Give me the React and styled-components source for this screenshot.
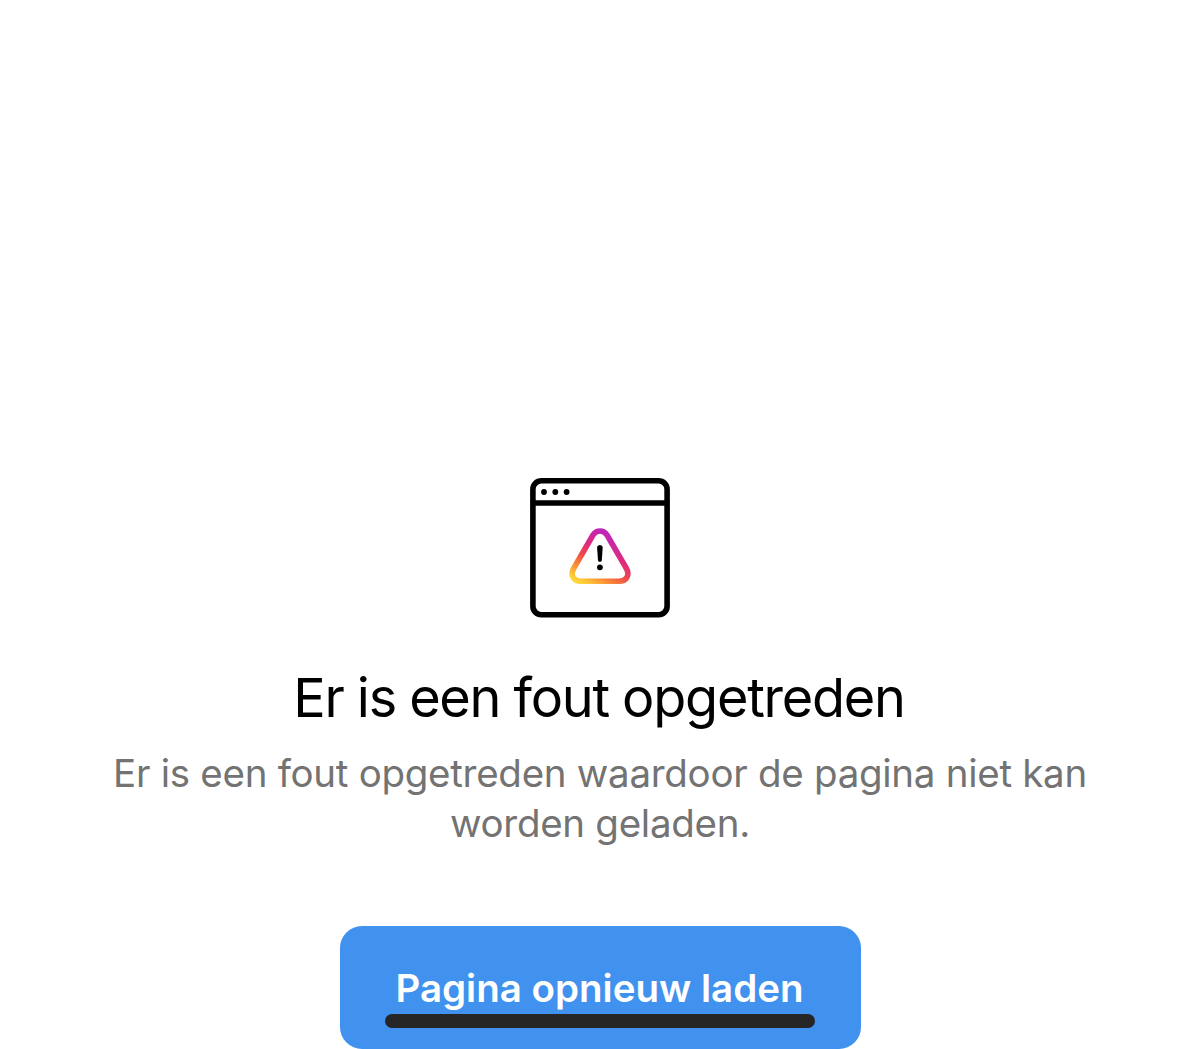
import React from 'react';
import styled, { createGlobalStyle } from 'styled-components';

const GlobalStyle = createGlobalStyle`
  body {
    margin: 0;
    background: #fff;
    font-family: Inter, 'Liberation Sans', sans-serif;
  }
`;

const Screen = styled.main`
  box-sizing: border-box;
  height: 1049px;
  padding-top: 478px;
  overflow: hidden;
  display: flex;
  flex-direction: column;
  align-items: center;
  background: #fff;
`;

const Illustration = styled.svg`
  display: block;
  flex: none;
  width: 140px;
  height: 140px;
`;

const Title = styled.h1`
  margin: 47px 2px 0 0;
  font-size: 54px;
  line-height: 66px;
  font-weight: 420;
  letter-spacing: -1.25px;
  word-spacing: -0.7px;
  white-space: nowrap;
  color: #000;
`;

const Message = styled.p`
  margin: 17px 0 0;
  width: 1000px;
  font-size: 38.5px;
  line-height: 50px;
  font-weight: 400;
  letter-spacing: -0.28px;
  text-align: center;
  color: #737373;
`;

const ReloadButton = styled.button`
  position: relative;
  box-sizing: border-box;
  flex: none;
  display: flex;
  justify-content: center;
  align-items: flex-start;
  width: 521px;
  height: 123px;
  margin: 78px 0 0;
  padding: 37px 1px 0 0;
  border: 0;
  border-radius: 22px;
  background: #4192ef;
  color: #fff;
  font-family: inherit;
  font-size: 38.5px;
  line-height: 50px;
  font-weight: 600;
  letter-spacing: 0;
  white-space: nowrap;
`;

const HomeIndicator = styled.span`
  position: absolute;
  left: 45px;
  top: 88px;
  width: 430px;
  height: 13.5px;
  border-radius: 7px;
  background: #262626;
`;

function BrowserError() {
  return (
    <Illustration viewBox="0 0 140 140" fill="none" aria-hidden="true">
      <defs>
        <linearGradient id="warning" x1="46" y1="106" x2="74" y2="54" gradientUnits="userSpaceOnUse">
          <stop offset="0" stopColor="#ffdc3c" />
          <stop offset="0.1" stopColor="#fdcc36" />
          <stop offset="0.28" stopColor="#f98e36" />
          <stop offset="0.48" stopColor="#f04a48" />
          <stop offset="0.7" stopColor="#df2b7e" />
          <stop offset="1" stopColor="#c026b8" />
        </linearGradient>
      </defs>
      <rect x="2.9" y="2.8" width="134.2" height="134" rx="8.5" stroke="#000" strokeWidth="5.6" />
      <path d="M3 25h134" stroke="#000" strokeWidth="5.6" />
      <circle cx="14" cy="14" r="2.9" fill="#000" />
      <circle cx="25.3" cy="14" r="2.9" fill="#000" />
      <circle cx="36.6" cy="14" r="2.9" fill="#000" />
      <path
        d="M63 57 L43.6 90.5 C39.9 97 43.7 103.2 50.5 103.2 H89.5 C96.3 103.2 100.1 97 96.4 90.5 L77 57 C73.6 51.6 66.4 51.6 63 57Z"
        stroke="url(#warning)"
        strokeWidth="5.6"
        strokeLinejoin="round"
      />
      <path d="M67.1 69.6 C67.1 66.2 72.7 66.2 72.7 69.6 L71.8 82.2 C71.6 84.2 68.2 84.2 68 82.2Z" fill="#000" />
      <circle cx="69.9" cy="89.3" r="2.9" fill="#000" />
    </Illustration>
  );
}

export default function App() {
  return (
    <>
      <GlobalStyle />
      <Screen>
        <BrowserError />
        <Title>Er is een fout opgetreden</Title>
        <Message>Er is een fout opgetreden waardoor de pagina niet kan worden geladen.</Message>
        <ReloadButton type="button">
          Pagina opnieuw laden
          <HomeIndicator />
        </ReloadButton>
      </Screen>
    </>
  );
}
